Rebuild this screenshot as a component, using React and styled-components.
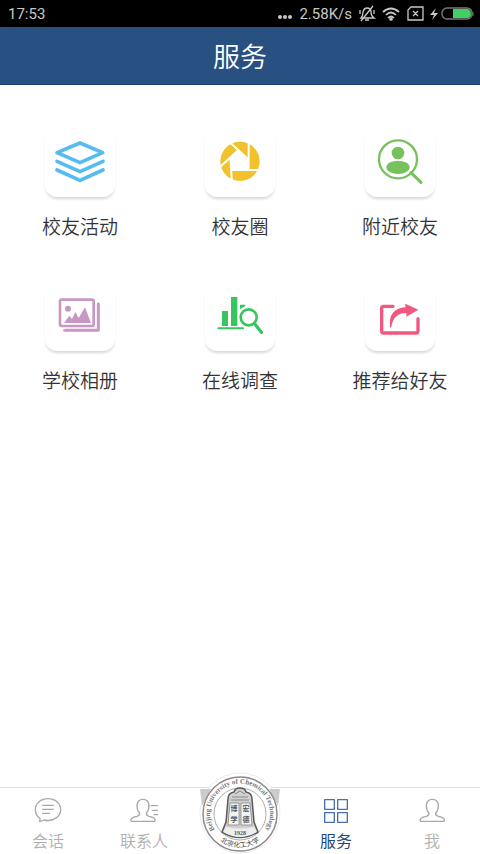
import React from 'react';
import styled, { createGlobalStyle } from 'styled-components';

const GlobalStyle = createGlobalStyle`
    * {
        box-sizing: border-box;
    }

    body {
        margin: 0;
        background: #fff;
        font-family: Roboto, "Noto Sans CJK SC", sans-serif;
    }
`;

const Page = styled.div`
    display: flex;
    flex-direction: column;
    min-height: 100vh;
`;

const StatusBar = styled.div`
    display: flex;
    align-items: center;
    gap: 6px;
    height: 27px;
    padding: 0 6px 0 8px;
    background: #000;
    color: #c8c8c8;
    font-size: 15px;
    line-height: 18px;
`;

const Clock = styled.time`
    margin-right: auto;
`;

const Header = styled.header`
    height: 58px;
    padding-top: 2px;
    border-bottom: 1px solid #153d73;
    background: #285182;
    color: #fff;
    text-align: center;
`;

const Title = styled.h1`
    margin: 0;
    font-size: 27px;
    font-weight: 350;
    line-height: 58px;
`;

const Services = styled.main`
    display: grid;
    grid-template-columns: repeat(3, 1fr);
    row-gap: 40px;
    padding: 42px 0;
`;

const Service = styled.button`
    display: flex;
    flex-direction: column;
    align-items: center;
    gap: 18px;
    padding: 0;
    border: 0;
    background: none;
    color: #333;
    font: inherit;
    font-size: 19px;
    font-weight: 350;
    line-height: 26px;
`;

const Tile = styled.svg`
    width: 70px;
    height: 70px;
    border-radius: 12px;
    background: #fff;
    box-shadow: 0 3px 3px -1px #d6d6d6;
    color: ${({ $color }) => $color};
`;

const TabBar = styled.nav`
    display: grid;
    grid-template-columns: repeat(5, 1fr);
    height: 67px;
    margin-top: auto;
    border-top: 1px solid #dedede;
`;

const Tab = styled.button`
    display: flex;
    flex-direction: column;
    align-items: center;
    gap: 6px;
    padding: 8px 0 0;
    border: 0;
    background: none;
    color: ${({ $active }) => $active ? '#24487c' : '#b0b0b0'};
    font: inherit;
    font-size: 16px;
    font-weight: ${({ $active }) => $active ? 400 : 350};
    line-height: 20px;
`;

const TabIcon = styled.svg`
    width: 30px;
    height: 30px;
    fill: none;
    stroke: ${({ $active }) => $active ? '#4870ae' : '#a9a9a9'};
    stroke-width: 4;
    stroke-linecap: round;
    stroke-linejoin: round;
`;

const SealButton = styled.button`
    justify-self: center;
    width: 82px;
    height: 82px;
    margin-top: -16px;
    padding: 0;
    border: 0;
    background: none;
`;

const personPath = 'M13 76 Q8 76 10 70 Q13 64 28 61 Q37 58 36 51 Q28 43 28 29 Q29 10 46 10 Q63 10 64 29 Q64 43 56 51 Q55 58 64 61 Q79 64 82 70 Q83 76 79 76 Z';

const services = [
    {
        name: '校友活动',
        color: '#56bbef',
        icon: <g fill="none" stroke="currentColor" strokeWidth="11" strokeLinecap="round" strokeLinejoin="round">
            <path d="M105 48 L173 77 L105 107 L36 77 Z" />
            <path d="M36 103 L105 134 L174 103" />
            <path d="M36 129 L105 160 L174 129" />
        </g>,
    },
    {
        name: '校友圈',
        color: '#f2c12e',
        icon: <>
            <circle cx="105" cy="103" r="59" fill="currentColor" />
            <path d="M101 68 L132 98 V128 H79 L76 91 Z" fill="#fff" />
            <path d="M68 40 L132 99 M131 38 V128 M168 129 H79 M81 165 L76 91 M41 124 L101 68" fill="none" stroke="#fff" strokeWidth="6" />
        </>,
    },
    {
        name: '附近校友',
        color: '#77c25d',
        icon: <>
            <circle cx="99" cy="97" r="57" fill="none" stroke="currentColor" strokeWidth="7" />
            <circle cx="99" cy="78" r="19" fill="currentColor" />
            <ellipse cx="99" cy="121" rx="35" ry="20" fill="currentColor" />
            <path d="M138 137 L168 166" stroke="currentColor" strokeWidth="9" strokeLinecap="round" />
        </>,
    },
    {
        name: '学校相册',
        color: '#c798c4',
        icon: <>
            <path d="M156 69 H160 V148 H59 V145" fill="none" stroke="currentColor" strokeWidth="9" strokeLinejoin="round" />
            <rect x="45" y="56" width="101" height="79" rx="5" fill="#fff" stroke="currentColor" strokeWidth="8" />
            <circle cx="69" cy="83" r="9" fill="currentColor" />
            <path d="M57 126 L73 104 L81 114 L91 93 L101 111 L120 79 L138 126 Z" fill="currentColor" />
        </>,
    },
    {
        name: '在线调查',
        color: '#35c65d',
        icon: <>
            <path d="M51 90 H69 V135 H51 Z M78 48 H97 V135 H78 Z M105 71 H121 V75 L105 85 Z" fill="currentColor" />
            <path d="M40 142 H114" stroke="currentColor" strokeWidth="6" strokeLinecap="round" />
            <circle cx="131" cy="109" r="24" fill="none" stroke="currentColor" strokeWidth="8" />
            <path d="M149 128 L169 154" stroke="currentColor" strokeWidth="10" strokeLinecap="round" />
        </>,
    },
    {
        name: '推荐给好友',
        color: '#f2587f',
        icon: <>
            <path d="M84 76 H56 Q50 76 50 82 V150 Q50 156 56 156 H153 Q159 156 159 150 V113" fill="none" stroke="currentColor" strokeWidth="10" strokeLinecap="round" />
            <path d="M75 139 Q69 83 121 79 V68 L160 86 L124 107 V96 Q86 96 79 137 Q77 141 75 139 Z" fill="currentColor" />
        </>,
    },
];

function StatusIcons() {
    return <>
        <svg width="18" height="18" viewBox="0 0 18 18" fill="none" stroke="currentColor" strokeWidth="1.3" role="img" aria-label="静音">
            <path d="M3 13 Q5 11 5 7 Q6 3 9 3 Q13 3 13 7 Q13 11 16 13 Z M7 15 H11 M15 1 L3 16 M2 5 V9 M16 5 V9" />
        </svg>
        <svg width="18" height="18" viewBox="0 0 18 18" fill="none" stroke="currentColor" strokeWidth="1.7" role="img" aria-label="无线网络">
            <path d="M1 7 Q9 0 17 7 M4 10 Q9 5 14 10 M6 13 Q9 10 12 13" />
            <circle cx="9" cy="14" r="1" fill="currentColor" />
        </svg>
        <svg width="18" height="18" viewBox="0 0 18 18" fill="none" stroke="currentColor" strokeWidth="1.3" role="img" aria-label="无SIM卡">
            <path d="M5 2 H17 V15 H2 V5 Z M7 6 L12 11 M12 6 L7 11" />
        </svg>
        <svg width="44" height="18" viewBox="0 0 44 18" role="img" aria-label="正在充电">
            <path d="M6 3 L0 10 H4 L2 15 L8 8 H4 Z" fill="currentColor" />
            <rect x="12" y="3" width="30" height="11" rx="5" fill="none" stroke="#777" strokeWidth="1.5" />
            <path d="M23 4 H38 Q41 5 41 9 Q41 12 38 13 H23 Z" fill="#42cf62" />
            <path d="M43 7 V11" stroke="#777" />
        </svg>
    </>;
}

function Seal() {
    return <svg width="82" height="82" viewBox="0 0 82 82" role="img" aria-label="北京化工大学">
        <circle cx="41" cy="41" r="40" fill="#fff" stroke="#ececec" />
        <path d="M1 17 H12 L3 34 Z M81 17 H70 L79 34 Z" fill="#ccc" />
        <circle cx="41" cy="42" r="37" fill="#fff" stroke="#8b8b8b" strokeWidth="1.5" />
        <circle cx="41" cy="42" r="26" fill="none" stroke="#999" strokeWidth=".8" />
        <path id="seal-top" d="M19 62 A30 30 0 1 1 63 62" fill="none" />
        <path id="seal-bottom" d="M14 62 A34 34 0 0 0 68 62" fill="none" />
        <text fontFamily="Liberation Serif, serif" fontSize="7" fontWeight="700" fill="#777" textAnchor="middle">
            <textPath href="#seal-top" startOffset="50%">Beijing University of Chemical Technology</textPath>
        </text>
        <text fontFamily="Noto Sans CJK SC, sans-serif" fontSize="7" fill="#444" textAnchor="middle">
            <textPath href="#seal-bottom" startOffset="50%">北京化工大学</textPath>
        </text>
        <path d="M35 20 Q36 16 41 16 Q46 16 47 20 Q53 21 53 27 L55 50 L59 60 Q41 71 23 60 L27 50 L29 27 Q29 21 35 20 Z" fill="#d0d0d0" stroke="#595959" strokeWidth="1.5" />
        <path d="M33 25 H49 M32 28 H50 M36 22 L41 19 L46 22" fill="none" stroke="#8a8a8a" />
        <path d="M31 31 H40 V53 H29 Z M42 31 H51 L53 53 H42 Z" fill="#f4f4f4" stroke="#777" strokeWidth=".7" />
        <g fontFamily="Noto Sans CJK SC, sans-serif" fontSize="7" fontWeight="700" fill="#555" textAnchor="middle">
            <text x="35" y="39">博</text>
            <text x="35" y="50">学</text>
            <text x="47" y="39">宏</text>
            <text x="47" y="50">德</text>
        </g>
        <path d="M27 55 Q41 58 55 55 L58 60 Q41 70 24 60 Z" fill="#eee" />
        <text x="41" y="63" fontFamily="Liberation Serif, serif" fontSize="6" fontWeight="700" fill="#555" textAnchor="middle">1928</text>
    </svg>;
}

export default function App() {
    return <Page>
        <GlobalStyle />
        <StatusBar>
            <Clock>17:53</Clock>
            <svg width="16" height="18" viewBox="0 0 16 18" fill="currentColor" aria-hidden="true">
                <circle cx="3" cy="12" r="2" />
                <circle cx="8" cy="12" r="2" />
                <circle cx="13" cy="12" r="2" />
            </svg>
            <span>2.58K/s</span>
            <StatusIcons />
        </StatusBar>
        <Header>
            <Title>服务</Title>
        </Header>
        <Services>
            {services.map(({ name, color, icon }) => (
                <Service key={name} type="button">
                    <Tile viewBox="0 0 210 210" $color={color} aria-hidden="true">{icon}</Tile>
                    {name}
                </Service>
            ))}
        </Services>
        <TabBar>
            <Tab type="button">
                <TabIcon viewBox="0 0 90 90" aria-hidden="true">
                    <path d="M21 67 L20 77 L33 72 C58 78 83 63 83 41 C83 22 66 8 45 8 C24 8 7 22 7 41 C7 52 12 61 21 67 Z M29 28 H61 M29 40 H61 M29 52 H50" />
                </TabIcon>
                会话
            </Tab>
            <Tab type="button">
                <TabIcon viewBox="4 0 90 90" aria-hidden="true">
                    <path d={personPath} />
                    <path d="M70 29 H90 M74 43 H90 M79 56 H90" />
                </TabIcon>
                联系人
            </Tab>
            <SealButton type="button">
                <Seal />
            </SealButton>
            <Tab type="button" $active aria-current="page">
                <TabIcon viewBox="0 0 90 90" $active aria-hidden="true">
                    <path d="M11 11 H40 V40 H11 Z M50 11 H79 V40 H50 Z M11 50 H40 V79 H11 Z M50 50 H79 V79 H50 Z" />
                </TabIcon>
                服务
            </Tab>
            <Tab type="button">
                <TabIcon viewBox="0 0 90 90" aria-hidden="true">
                    <path d={personPath} />
                </TabIcon>
                我
            </Tab>
        </TabBar>
    </Page>;
}
